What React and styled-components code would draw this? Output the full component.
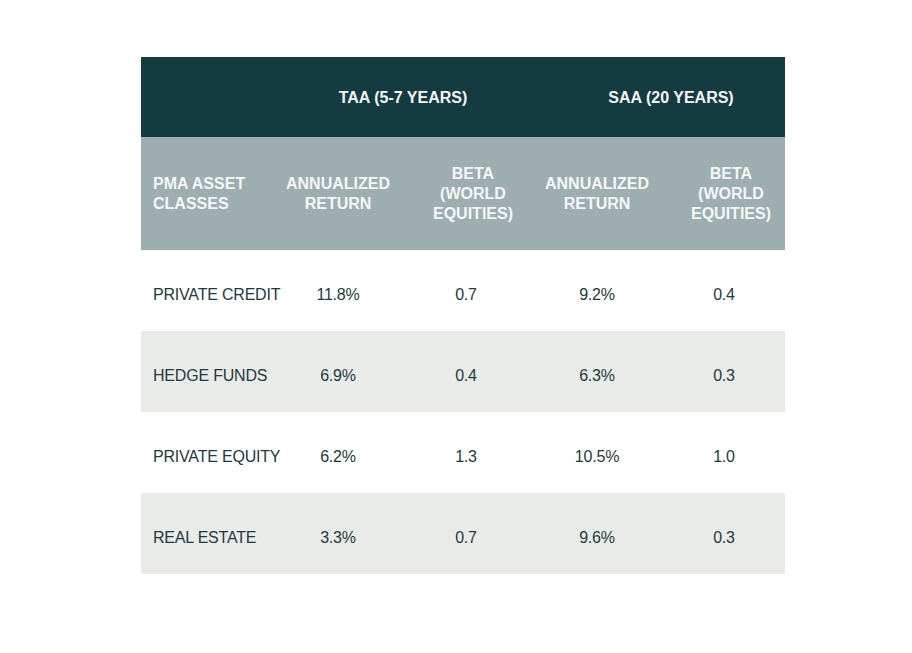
import React from 'react';
import styled, { createGlobalStyle } from 'styled-components';

const rows = [
	{ name: 'PRIVATE CREDIT', taaReturn: '11.8%', taaBeta: '0.7', saaReturn: '9.2%', saaBeta: '0.4' },
	{ name: 'HEDGE FUNDS', taaReturn: '6.9%', taaBeta: '0.4', saaReturn: '6.3%', saaBeta: '0.3' },
	{ name: 'PRIVATE EQUITY', taaReturn: '6.2%', taaBeta: '1.3', saaReturn: '10.5%', saaBeta: '1.0' },
	{ name: 'REAL ESTATE', taaReturn: '3.3%', taaBeta: '0.7', saaReturn: '9.6%', saaBeta: '0.3' },
];

function App() {
	return (
		<Page>
			<GlobalStyle />
			<Table>
				<GroupHead />
				<GroupHead span={2}>TAA (5-7 YEARS)</GroupHead>
				<GroupHead span={2} shift={26}>SAA (20 YEARS)</GroupHead>

				<ColHead align="left">
					PMA ASSET
					<br />
					CLASSES
				</ColHead>
				<ColHead>
					ANNUALIZED
					<br />
					RETURN
				</ColHead>
				<ColHead shift={14}>
					BETA
					<br />
					(WORLD
					<br />
					EQUITIES)
				</ColHead>
				<ColHead>
					ANNUALIZED
					<br />
					RETURN
				</ColHead>
				<ColHead shift={14}>
					BETA
					<br />
					(WORLD
					<br />
					EQUITIES)
				</ColHead>

				{rows.map((row, idx) => (
					<React.Fragment key={row.name}>
						<Cell striped={idx % 2 === 1} align="left">
							{row.name}
						</Cell>
						<Cell striped={idx % 2 === 1}>{row.taaReturn}</Cell>
						<Cell striped={idx % 2 === 1}>{row.taaBeta}</Cell>
						<Cell striped={idx % 2 === 1}>{row.saaReturn}</Cell>
						<Cell striped={idx % 2 === 1}>{row.saaBeta}</Cell>
					</React.Fragment>
				))}
			</Table>
		</Page>
	);
}

export default App;

const GlobalStyle = createGlobalStyle`
	body {
		margin: 0;
		background: #ffffff;
		font-family: 'Liberation Sans', Arial, sans-serif;
	}
`;

const Page = styled.div`
	padding: 57px 0 0 141px;
`;

const Table = styled.div`
	display: grid;
	grid-template-columns: 134px 126px 130px 132px 122px;
	grid-template-rows: 80px 113px repeat(4, 81px);
	width: 644px;
`;

const GroupHead = styled.div`
	grid-column: span ${(p) => p.span || 1};
	display: flex;
	align-items: center;
	justify-content: center;
	padding-left: ${(p) => p.shift || 0}px;
	background-color: #143b41;
	color: #f4f6f5;
	font-size: 16px;
	font-weight: bold;
	padding-top: 2px;
`;

const ColHead = styled.div`
	display: flex;
	align-items: center;
	justify-content: ${(p) => (p.align === 'left' ? 'flex-start' : 'center')};
	text-align: ${(p) => (p.align === 'left' ? 'left' : 'center')};
	padding: 0 0 0 ${(p) => (p.align === 'left' ? 12 : p.shift || 0)}px;
	background-color: #9dadb0;
	color: #f4f6f5;
	font-size: 16px;
	font-weight: bold;
	line-height: 20px;
`;

const Cell = styled.div`
	display: flex;
	align-items: center;
	justify-content: ${(p) => (p.align === 'left' ? 'flex-start' : 'center')};
	padding: 8px 0 0 ${(p) => (p.align === 'left' ? 12 : 0)}px;
	background-color: ${(p) => (p.striped ? '#e9ebe8' : '#ffffff')};
	color: #1d3a3e;
	font-size: 16px;
	letter-spacing: -0.2px;
	white-space: nowrap;
	position: relative;
	z-index: ${(p) => (p.align === 'left' ? 1 : 0)};
`;
